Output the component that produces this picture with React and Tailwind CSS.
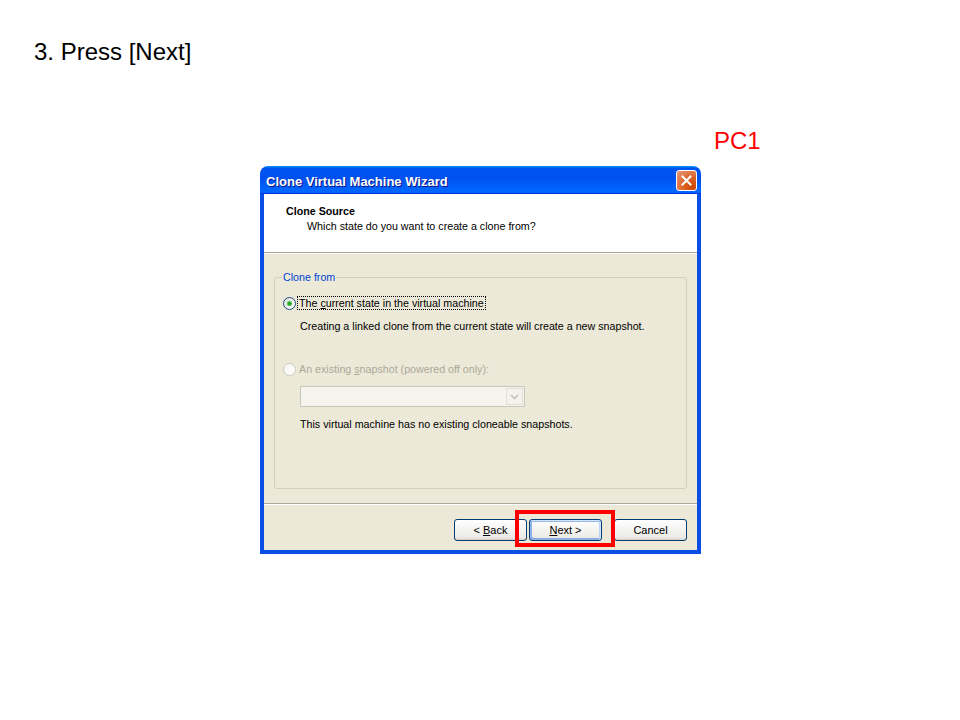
import React from "react";

const font = "font-['Liberation_Sans',Arial,sans-serif]";

const Radio = ({ checked = false, disabled = false }) => (
  <svg width="13" height="13" viewBox="0 0 13 13" className="shrink-0">
    <defs>
      <linearGradient id={disabled ? "rg-d" : "rg"} x1="0" y1="0" x2="1" y2="1">
        <stop offset="0" stopColor={disabled ? "#f4f3ee" : "#dcdcd7"} />
        <stop offset="1" stopColor="#ffffff" />
      </linearGradient>
    </defs>
    <circle
      cx="6.5"
      cy="6.5"
      r="6"
      fill={`url(#${disabled ? "rg-d" : "rg"})`}
      stroke={disabled ? "#cac8bb" : "#1c5180"}
      strokeWidth="1"
    />
    {checked && (
      <>
        <circle cx="6.5" cy="6.5" r="2.6" fill="#55c855" />
        <circle cx="6.5" cy="6.5" r="1.6" fill="#21a121" />
      </>
    )}
  </svg>
);

const XpButton = ({ children, isDefault = false }) => (
  <button
    className={`w-[73px] h-[22px] rounded-[3px] border border-[#003c74] bg-[linear-gradient(180deg,#ffffff,#ecebe6_86%,#d6d0c5)] text-[11px] leading-[20px] text-black ${
      isDefault
        ? "shadow-[inset_-1px_1px_#cee7ff,inset_1px_2px_#98b8ea,inset_-2px_2px_#bcd4f6,inset_1px_-1px_#89ade4,inset_2px_-2px_#89ade4]"
        : ""
    }`}
  >
    {children}
  </button>
);

const CloseButton = () => (
  <div className="w-[21px] h-[21px] rounded-[3px] border border-white bg-[radial-gradient(circle_at_85%_85%,#cc4600,#dc6527_45%,#e69a7f)] flex items-center justify-center">
    <svg width="11" height="11" viewBox="0 0 11 11">
      <path d="M1.5 1.5 L9.5 9.5 M9.5 1.5 L1.5 9.5" stroke="#ffffff" strokeWidth="2" strokeLinecap="square" />
    </svg>
  </div>
);

const Etched = () => (
  <div className="h-[2px] border-t border-[#aca899] border-b border-b-white" />
);

export default function App() {
  return (
    <div className={`relative w-[960px] h-[720px] bg-white ${font}`}>
      <div className="pt-[38px] pl-[34px] text-[24px] leading-[28px] text-black">
        3. Press [Next]
      </div>
      <div className="mt-[61px] pl-[714px] text-[24px] leading-[28px] text-[#ff0000]">
        PC1
      </div>

      <div className="mt-[11px] ml-[260px] w-[441px] flex flex-col">
        <div className="h-[28px] rounded-t-[8px] bg-[linear-gradient(180deg,#0997ff,#0053ee_8%,#0050ee_40%,#06f_88%,#06f_93%,#005bff_95%,#003dd7_96%,#003dd7)] flex items-center justify-between pl-[6px] pr-[4px]">
          <span className="pt-[4px] text-white font-bold text-[13px] [text-shadow:1px_1px_#0f1089]">
            Clone Virtual Machine Wizard
          </span>
          <CloseButton />
        </div>

        <div className="border-x-4 border-b-4 border-[#0b4ee6] text-[10.7px] leading-[14px] text-black">
          <div className="h-[58px] bg-white pl-[22px] pt-[10px]">
            <div className="font-bold">Clone Source</div>
            <div className="mt-[1px] pl-[21px]">Which state do you want to create a clone from?</div>
          </div>
          <Etched />

          <div className="h-[249px] bg-[#ece9d8] px-[10px] pt-[16px]">
            <fieldset className="h-[219px] border border-[#d0d0bf] rounded-[3px] px-[8px]">
              <legend className="px-[1px] -ml-[1px] text-[#0046d5]">Clone from</legend>

              <div className="mt-[12px] flex items-center h-[14px]">
                <Radio checked />
                <span className="ml-[1px] px-[1px] border border-dotted border-black leading-[12px]">
                  The <span className="underline">c</span>urrent state in the virtual machine
                </span>
              </div>
              <div className="mt-[9px] pl-[17px]">
                Creating a linked clone from the current state will create a new snapshot.
              </div>

              <div className="mt-[29px] flex items-center h-[14px] text-[#aca899]">
                <Radio disabled />
                <span className="ml-[2px] px-[1px]">
                  An existing <span className="underline">s</span>napshot (powered off only):
                </span>
              </div>
              <div className="mt-[10px] ml-[17px] w-[225px] h-[21px] border border-[#c9c7ba] bg-[#f5f4ee] flex justify-end p-[1px]">
                <div className="w-[17px] h-full border border-[#e2e0d6] bg-[#f3f2ec] flex items-center justify-center">
                  <svg width="9" height="6" viewBox="0 0 9 6">
                    <path d="M1 1 L4.5 4.5 L8 1" stroke="#c7c5b8" strokeWidth="1.6" fill="none" />
                  </svg>
                </div>
              </div>
              <div className="mt-[10px] pl-[17px]">
                This virtual machine has no existing cloneable snapshots.
              </div>
            </fieldset>
          </div>
          <Etched />

          <div className="h-[45px] bg-[#ece9d8] flex justify-end items-start pt-[14px] pr-[10px]">
            <XpButton>
              &lt; <span className="underline">B</span>ack
            </XpButton>
            <div className="ml-[2px]">
              <XpButton isDefault>
                <span className="underline">N</span>ext &gt;
              </XpButton>
            </div>
            <div className="ml-[12px]">
              <XpButton>Cancel</XpButton>
            </div>
          </div>
        </div>
      </div>

      <div className="absolute left-[515px] top-[510px] w-[100px] h-[37px] border-4 border-[#ff0000]" />
    </div>
  );
}
